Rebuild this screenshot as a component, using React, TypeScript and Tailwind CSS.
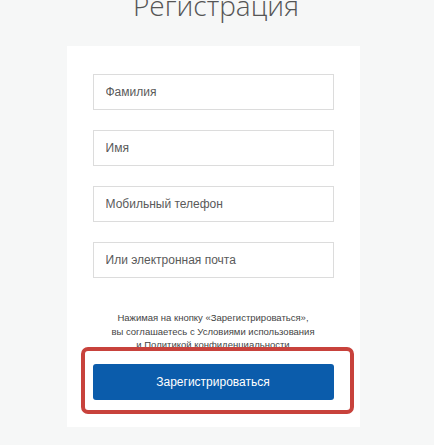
import React from 'react';

const fields = ['Фамилия', 'Имя', 'Мобильный телефон', 'Или электронная почта'];

function App() {
  return (
    <div className="w-[434px] h-[445px] overflow-hidden bg-[#f6f7f7] flex flex-col items-center">
      <h1 className="mt-[-9px] text-[28px] leading-[28px] font-light text-[#555] font-['Open_Sans',sans-serif] ml-[-2px]">
        Регистрация
      </h1>
      <div className="mt-[27px] w-[293px] bg-white px-[26px] pt-[28px] pb-[27px] flex flex-col font-['Liberation_Sans',Arial,sans-serif] ml-[-8px]">
        <div className="flex flex-col gap-[20px]">
          {fields.map((f) => (
            <input
              key={f}
              placeholder={f}
              className="h-[36px] w-full border border-[#dcdcdc] bg-white px-[12px] text-[12px] text-[#555] placeholder:text-[#5a5a5a] outline-none"
            />
          ))}
        </div>
        <p className="mt-[33px] text-center text-[9.5px] leading-[13.5px] text-[#444]">
          Нажимая на кнопку «Зарегистрироваться»,
          <br />
          вы соглашаетесь с Условиями использования
          <br />
          и Политикой конфиденциальности
        </p>
        <div className="relative mt-[12px]">
          <button className="h-[36px] w-full rounded-[3px] bg-[#0b5cab] text-[12px] text-white">
            Зарегистрироваться
          </button>
          <div className="absolute left-[-12px] right-[-20px] top-[-17px] bottom-[-14px] rounded-[7px] border-[4px] border-[#c8423c]" />
        </div>
      </div>
    </div>
  );
}

export default App;
